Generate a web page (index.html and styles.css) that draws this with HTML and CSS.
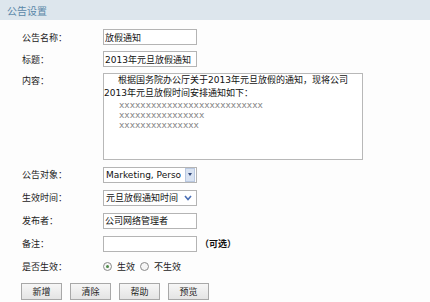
FILE: index.html
```html
<!DOCTYPE html>
<html>
<head>
	<meta charset="utf-8">
	<meta name="viewport" content="width=device-width, initial-scale=1">
	<link rel="stylesheet" href="styles.css">
</head>
<body>
	<div class="panel">
		<div class="panel_title">公告设置</div>
		<div class="form">
			<div class="row">
				<span class="label">公告名称：</span>
				<input class="field" type="text" value="放假通知">
			</div>
			<div class="row">
				<span class="label">标题：</span>
				<input class="field" type="text" value="2013年元旦放假通知">
			</div>
			<div class="row row_content">
				<span class="label">内容：</span>
				<div class="content_box">
					<div class="cn indent">根据国务院办公厅关于2013年元旦放假的通知，现将公司</div>
					<div class="cn">2013年元旦放假时间安排通知如下：</div>
					<div class="xs">xxxxxxxxxxxxxxxxxxxxxxxxxxx</div>
					<div class="xs">xxxxxxxxxxxxxxxx</div>
					<div class="xs">xxxxxxxxxxxxxxx</div>
				</div>
			</div>
			<div class="row row_tall">
				<span class="label">公告对象：</span>
				<div class="select">
					<span class="select_text">Marketing, Perso</span>
					<span class="arrow_box"><span class="tri"></span></span>
				</div>
			</div>
			<div class="row row_tall">
				<span class="label">生效时间：</span>
				<div class="select">
					<span class="select_text">元旦放假通知时间</span>
					<span class="chevron">
						<svg width="8" height="6" viewBox="0 0 8 6"><path d="M1 1 L4 4.5 L7 1" fill="none" stroke="#4a6fb5" stroke-width="1.6"/></svg>
					</span>
				</div>
			</div>
			<div class="row row_tall">
				<span class="label">发布者：</span>
				<input class="field" type="text" value="公司网络管理者">
			</div>
			<div class="row row_tall">
				<span class="label">备注：</span>
				<input class="field" type="text" value="">
				<span class="hint">（可选）</span>
			</div>
			<div class="row row_tall">
				<span class="label">是否生效：</span>
				<div class="radios">
					<span class="radio checked"></span><span class="radio_text">生效</span>
					<span class="radio"></span><span class="radio_text">不生效</span>
				</div>
			</div>
			<div class="buttons">
				<button class="btn">新增</button>
				<button class="btn">清除</button>
				<button class="btn">帮助</button>
				<button class="btn">预览</button>
			</div>
		</div>
	</div>
</body>
</html>
```

FILE: styles.css
```css
body {
	margin: 0;
	background: #fdfdfd;
	font-family: "DejaVu Sans", "Noto Sans CJK SC", sans-serif;
	font-size: 9px;
	color: #222;
}

.panel_title {
	height: 20px;
	line-height: 22px;
	padding-left: 7px;
	background: #dde6ed;
	color: #5a86a8;
	font-size: 10px;
	font-family: "Noto Sans CJK SC", sans-serif;
}

.form {
	display: flex;
	flex-direction: column;
	gap: 6px;
	padding: 9px 0 0 22px;
}

.row {
	display: flex;
	align-items: center;
	height: 16px;
}

.row_tall {
	height: 17px;
}

.row_content {
	height: 87px;
	align-items: flex-start;
}

.label {
	width: 81px;
	flex: none;
	font-family: "Noto Sans CJK SC", sans-serif;
	color: #222;
}

.row_content .label {
	padding-top: 1px;
}

.field {
	box-sizing: border-box;
	width: 94px;
	height: 16px;
	margin: 0;
	padding: 0 1px;
	border: 1px solid #b4b4b4;
	background: #fff;
	font: inherit;
	font-size: 9px;
	color: #111;
	outline: none;
}

.content_box {
	box-sizing: border-box;
	width: 260px;
	height: 87px;
	border: 1px solid #b8b8b8;
	background: #fff;
	padding-top: 0;
	color: #111;
}

.cn {
	line-height: 13px;
	white-space: nowrap;
}

.indent {
	padding-left: 14px;
}

.xs {
	padding-left: 15px;
	line-height: 10px;
	color: #888;
}

.select {
	box-sizing: border-box;
	width: 94px;
	height: 16px;
	display: flex;
	align-items: center;
	justify-content: space-between;
	border: 1px solid #b4b4b4;
	background: #fff;
	padding-left: 2px;
	color: #111;
}

.select_text {
	white-space: nowrap;
	overflow: hidden;
}

.arrow_box {
	width: 8px;
	height: 12px;
	margin-right: 1px;
	background: #d9e3f2;
	border: 1px solid #b9c8e0;
	display: flex;
	align-items: center;
	justify-content: center;
}

.tri {
	width: 0;
	height: 0;
	border-left: 2.5px solid transparent;
	border-right: 2.5px solid transparent;
	border-top: 3px solid #33497a;
}

.chevron {
	display: flex;
	margin-right: 4px;
}

.hint {
	margin-left: 3px;
	font-family: "Noto Sans CJK SC", sans-serif;
	font-weight: bold;
	color: #111;
}

.radios {
	display: flex;
	align-items: center;
}

.radio {
	box-sizing: border-box;
	width: 9px;
	height: 9px;
	border: 1px solid #8a8a8a;
	border-radius: 50%;
	background: #f6f6f6;
	display: flex;
	align-items: center;
	justify-content: center;
}

.radio.checked::after {
	content: "";
	width: 3px;
	height: 3px;
	border-radius: 50%;
	background: #4f8a4a;
}

.radio_text {
	margin: 0 5px 0 5px;
	font-family: "Noto Sans CJK SC", sans-serif;
}

.buttons {
	display: flex;
	gap: 8px;
	margin-top: 2px;
	margin-left: -1px;
}

.btn {
	box-sizing: border-box;
	width: 41px;
	height: 17px;
	margin: 0;
	padding: 0;
	border: 1px solid #a8a8a8;
	background: linear-gradient(#f6f6f6, #e4e4e4);
	font-family: "Noto Sans CJK SC", sans-serif;
	font-size: 9px;
	color: #222;
}
```
